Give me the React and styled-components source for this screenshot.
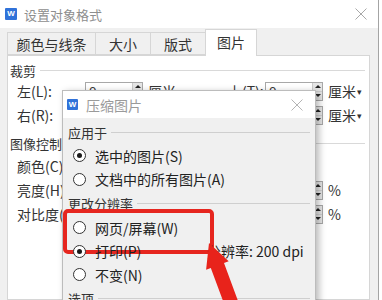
import React from 'react';
import styled, { createGlobalStyle } from 'styled-components';

const GlobalStyle = createGlobalStyle`
  html, body {
    margin: 0;
    padding: 0;
    background: #ffffff;
    overflow: hidden;
  }
  #root {
    width: 382px;
    height: 300px;
  }
  * {
    box-sizing: border-box;
  }
`;

const CJK = `"Noto Sans CJK SC", "Noto Sans", sans-serif`;

function App() {
  return (
    <>
      <GlobalStyle />
      <Window>
        <TitleBar>
          <AppIcon>W</AppIcon>
          <TitleText>设置对象格式</TitleText>
          <CloseIcon size={12} color="#a8a8a8" />
        </TitleBar>

        <TabRow>
          <Tab $w={89}>颜色与线条</Tab>
          <Tab $w={56}>大小</Tab>
          <Tab $w={56}>版式</Tab>
          <Tab $w={52} $active>图片</Tab>
        </TabRow>

        <Panel>
          <SectionHead>裁剪</SectionHead>
          <FieldGrid>
            <Label>左(L):</Label>
            <NumberBox value="0" />
            <Unit>厘米<Caret>▾</Caret></Unit>
            <Label>上(T):</Label>
            <NumberBox value="0" />
            <Unit>厘米<Caret>▾</Caret></Unit>

            <Label>右(R):</Label>
            <NumberBox value="0" />
            <Unit>厘米<Caret>▾</Caret></Unit>
            <Label>下(B):</Label>
            <NumberBox value="0" />
            <Unit>厘米<Caret>▾</Caret></Unit>
          </FieldGrid>

          <SectionHead $mt={7}>图像控制</SectionHead>
          <FieldGrid $mt={2}>
            <Label>颜色(C):</Label>
            <Dropdown>自动</Dropdown>
            <Spacer />

            <Label>亮度(H):</Label>
            <Slider />
            <NumberBox value="50" />
            <Unit>%</Unit>

            <Label>对比度(O):</Label>
            <Slider />
            <NumberBox value="50" />
            <Unit>%</Unit>
          </FieldGrid>
        </Panel>

        <Dialog>
          <DialogTitleBar>
            <AppIcon $small>W</AppIcon>
            <DialogTitle>压缩图片</DialogTitle>
            <CloseIcon size={12} color="#b4b4b4" />
          </DialogTitleBar>
          <DialogBody>
            <SectionHead $inner>应用于</SectionHead>
            <RadioGroup $mt={3}>
              <RadioRow>
                <RadioDot $checked />
                <RadioText>选中的图片(S)</RadioText>
              </RadioRow>
              <RadioRow>
                <RadioDot />
                <RadioText>文档中的所有图片(A)</RadioText>
              </RadioRow>
            </RadioGroup>

            <SectionHead $inner $mt={3}>更改分辨率</SectionHead>
            <RadioGroup $mt={4}>
              <RadioRow $highlight>
                <RadioDot />
                <RadioText>网页/屏幕(W)</RadioText>
              </RadioRow>
              <RadioRow>
                <RadioDot $checked />
                <RadioText $w={103}>打印(P)</RadioText>
                <DpiNote>分辨率: 200 dpi</DpiNote>
              </RadioRow>
              <RadioRow>
                <RadioDot />
                <RadioText>不变(N)</RadioText>
              </RadioRow>
            </RadioGroup>

            <SectionHead $inner $mt={3}>选项</SectionHead>
          </DialogBody>
        </Dialog>

        <Arrow width="60" height="80" viewBox="0 0 60 80">
          <polygon
            points="14,8 33.7,26.3 29,28.1 45,71.3 31.8,76.1 15.8,33 11.1,34.7"
            fill="#e8231b"
          />
        </Arrow>
      </Window>
    </>
  );
}

function CloseIcon({ size, color }) {
  return (
    <CloseSvg width={size} height={size} viewBox="0 0 12 12">
      <path d="M0.5 0.5 L11.5 11.5 M11.5 0.5 L0.5 11.5" stroke={color} strokeWidth="1" />
    </CloseSvg>
  );
}

function NumberBox({ value }) {
  return (
    <InputBox>
      <InputValue>{value}</InputValue>
      <Spinner>
        <SpinBtn $dir="up" />
        <SpinBtn $dir="down" />
      </Spinner>
    </InputBox>
  );
}

const Window = styled.div`
  position: relative;
  width: 379px;
  height: 300px;
  background: #f0f0f0;
  border-right: 1px solid #a4a4a4;
  overflow: hidden;
  font-family: ${CJK};
  color: #333;
`;

const TitleBar = styled.div`
  height: 28px;
  background: #ffffff;
  display: flex;
  align-items: center;
  padding: 0 11px 0 5px;
`;

const AppIcon = styled.span`
  width: ${p => (p.$small ? 11 : 12)}px;
  height: ${p => (p.$small ? 11 : 12)}px;
  background: #3072d9;
  color: #ffffff;
  border-radius: 1px;
  display: flex;
  align-items: center;
  justify-content: center;
  font-family: "Liberation Sans", sans-serif;
  font-weight: bold;
  font-size: 8px;
  line-height: 1;
  flex-shrink: 0;
`;

const TitleText = styled.span`
  margin-left: 7px;
  font-size: 13px;
  color: #8e8e8e;
`;

const CloseSvg = styled.svg`
  margin-left: auto;
  display: block;
`;

const TabRow = styled.div`
  height: 27px;
  display: flex;
  align-items: flex-end;
  padding-left: 7px;
`;

const Tab = styled.div`
  width: ${p => p.$w}px;
  height: ${p => (p.$active ? 27 : 23)}px;
  margin-left: -1px;
  margin-bottom: ${p => (p.$active ? -1 : 0)}px;
  display: flex;
  align-items: center;
  justify-content: center;
  padding-bottom: ${p => (p.$active ? 2 : 0)}px;
  font-size: 14px;
  color: #333;
  background: ${p => (p.$active ? '#ffffff' : '#f0f0f0')};
  border: 1px solid #d6d6d6;
  border-bottom: ${p => (p.$active ? 'none' : '1px solid #d6d6d6')};
  position: relative;
  z-index: ${p => (p.$active ? 2 : 0)};
  &:first-child {
    margin-left: 0;
  }
`;

const Panel = styled.div`
  position: relative;
  z-index: 1;
  margin-left: 7px;
  width: 363px;
  height: 245px;
  background: #ffffff;
  border: 1px solid #d6d6d6;
  padding: 5px 4px 0 2px;
`;

const SectionHead = styled.div`
  display: flex;
  align-items: center;
  height: 18px;
  margin-top: ${p => p.$mt || 0}px;
  font-size: 13px;
  color: #333;
  white-space: nowrap;
  &::after {
    content: "";
    flex: 1;
    height: 1px;
    margin-left: 4px;
    background: ${p => (p.$inner ? '#cfcfcf' : '#d9d9d9')};
  }
`;

const FieldGrid = styled.div`
  display: grid;
  grid-template-columns: 68px 58px 85px 37px 58px auto;
  grid-auto-rows: 24px;
  align-items: center;
  padding-left: 7px;
  margin-top: ${p => p.$mt || 0}px;
`;

const Label = styled.span`
  font-size: 14px;
  color: #333;
  white-space: nowrap;
`;

const Unit = styled.span`
  padding-left: 5px;
  font-size: 14px;
  color: #333;
  white-space: nowrap;
`;

const Caret = styled.span`
  font-size: 9px;
  margin-left: 1px;
  vertical-align: 2px;
`;

const InputBox = styled.div`
  height: 19px;
  display: flex;
  border: 1px solid #a8a8a8;
  background: #ffffff;
`;

const InputValue = styled.span`
  flex: 1;
  padding-left: 3px;
  font-family: "Noto Sans", sans-serif;
  font-size: 13px;
  line-height: 17px;
`;

const Spinner = styled.div`
  width: 10px;
  display: flex;
  flex-direction: column;
  border-left: 1px solid #cccccc;
`;

const SpinBtn = styled.div`
  flex: 1;
  background: #e6e6e6;
  display: flex;
  align-items: center;
  justify-content: center;
  border-bottom: ${p => (p.$dir === 'up' ? '1px solid #d0d0d0' : 'none')};
  &::before {
    content: "";
    border-left: 3px solid transparent;
    border-right: 3px solid transparent;
    border-${p => (p.$dir === 'up' ? 'bottom' : 'top')}: 3px solid #222;
  }
`;

const Dropdown = styled.div`
  grid-column: 2 / 4;
  height: 19px;
  border: 1px solid #a8a8a8;
  font-size: 13px;
  line-height: 17px;
  padding-left: 4px;
  width: 110px;
`;

const Spacer = styled.div`
  grid-column: 4 / 7;
`;

const Slider = styled.div`
  grid-column: 2 / 5;
  height: 4px;
  margin-right: 20px;
  background: #dcdcdc;
  border-radius: 2px;
`;

const Dialog = styled.div`
  position: absolute;
  left: 62px;
  top: 90px;
  width: 254px;
  height: 240px;
  z-index: 5;
  background: #f0f0f0;
  border: 1px solid #bcbcbc;
  box-shadow: 3px 2px 7px rgba(0, 0, 0, 0.28);
`;

const DialogTitleBar = styled.div`
  height: 27px;
  background: #ffffff;
  display: flex;
  align-items: center;
  padding: 0 12px 0 4px;
`;

const DialogTitle = styled.span`
  margin-left: 8px;
  font-size: 14px;
  color: #9a9a9a;
`;

const DialogBody = styled.div`
  padding: 5px 5px 0 5px;
`;

const RadioGroup = styled.div`
  margin-top: ${p => p.$mt || 0}px;
  padding-left: 5px;
`;

const RadioRow = styled.div`
  position: relative;
  height: 23.5px;
  display: flex;
  align-items: center;
  gap: 9px;
  font-size: 14px;
  color: #222;
  &::after {
    content: "";
    display: ${p => (p.$highlight ? 'block' : 'none')};
    position: absolute;
    left: -10px;
    top: -7px;
    width: 143px;
    height: 37px;
    border: 4px solid #e6261f;
    border-radius: 5px;
  }
`;

const RadioDot = styled.span`
  width: 13px;
  height: 13px;
  border-radius: 50%;
  border: 1px solid #333;
  background: #ffffff;
  display: flex;
  align-items: center;
  justify-content: center;
  flex-shrink: 0;
  &::after {
    content: "";
    display: ${p => (p.$checked ? 'block' : 'none')};
    width: 5px;
    height: 5px;
    border-radius: 50%;
    background: #1a1a1a;
  }
`;

const RadioText = styled.span`
  white-space: nowrap;
  width: ${p => (p.$w ? `${p.$w}px` : 'auto')};
`;

const DpiNote = styled.span`
  font-size: 14px;
  color: #222;
  white-space: nowrap;
`;

const Arrow = styled.svg`
  position: absolute;
  left: 195px;
  top: 235px;
  z-index: 10;
`;

export default App;
